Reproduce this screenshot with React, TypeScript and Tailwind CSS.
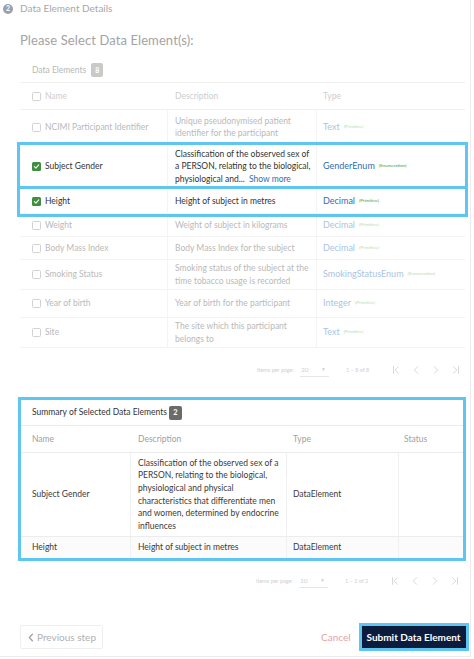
import React from "react";

const FONT = "font-['Lato','Liberation_Sans',sans-serif]";

function Box({ checked }: { checked?: boolean }) {
  if (checked) {
    return (
      <span className="w-[9px] h-[9px] rounded-[1.5px] bg-[#3f8f3f] flex items-center justify-center shrink-0">
        <svg width="7" height="7" viewBox="0 0 10 10">
          <path d="M2 5.2 L4.2 7.3 L8.2 2.8" fill="none" stroke="white" strokeWidth="1.6" strokeLinecap="round" strokeLinejoin="round" />
        </svg>
      </span>
    );
  }
  return <span className="w-[9px] h-[9px] rounded-[1.5px] border border-[#d2d2d2] bg-white shrink-0" />;
}

function PagIcon({ kind }: { kind: "first" | "prev" | "next" | "last" }) {
  const d: Record<string, string> = {
    first: "M3 2 V10 M9 2 L5 6 L9 10",
    prev: "M8 2 L4 6 L8 10",
    next: "M4 2 L8 6 L4 10",
    last: "M9 2 V10 M3 2 L7 6 L3 10",
  };
  return (
    <svg width="10" height="10" viewBox="0 0 12 12">
      <path d={d[kind]} fill="none" stroke="#d4d4d4" strokeWidth="1.1" strokeLinecap="round" strokeLinejoin="round" />
    </svg>
  );
}

function Pagination({ per, range }: { per: string; range: string }) {
  return (
    <div className="flex items-center h-[16px] text-[#cfcfcf]">
      <span className="text-[5.5px] w-[43px]">Items per page:</span>
      <div className="flex items-center w-[29px] h-[14px] border-b border-[#e6e6e6]">
        <span className="text-[6.5px] pl-[1px]">{per}</span>
        <span className="ml-auto mr-[3px] text-[5px]">▼</span>
      </div>
      <span className="text-[5.5px] ml-[17px] w-[45px]">{range}</span>
      <div className="flex items-center gap-[10px]">
        <PagIcon kind="first" />
        <PagIcon kind="prev" />
        <PagIcon kind="next" />
        <PagIcon kind="last" />
      </div>
    </div>
  );
}

type Row = {
  name: string;
  desc: React.ReactNode;
  type: string;
  kind: string;
  h: string;
  sel?: boolean;
};

const rows: Row[] = [
  { name: "NCIMI Participant Identifier", desc: "Unique pseudonymised patient identifier for the participant", type: "Text", kind: "(Primitive)", h: "h-[35px]" },
  {
    name: "Subject Gender",
    desc: (
      <>
        Classification of the observed sex of a PERSON, relating to the biological, physiological and...{" "}
        <span className="text-[#2f6db5] ml-[2px]">Show more</span>
      </>
    ),
    type: "GenderEnum",
    kind: "(Enumeration)",
    h: "h-[44px]",
    sel: true,
  },
  { name: "Height", desc: "Height of subject in metres", type: "Decimal", kind: "(Primitive)", h: "h-[25px]", sel: true },
  { name: "Weight", desc: "Weight of subject in kilograms", type: "Decimal", kind: "(Primitive)", h: "h-[23px]" },
  { name: "Body Mass Index", desc: "Body Mass Index for the subject", type: "Decimal", kind: "(Primitive)", h: "h-[23px]" },
  { name: "Smoking Status", desc: "Smoking status of the subject at the time tobacco usage is recorded", type: "SmokingStatusEnum", kind: "(Enumeration)", h: "h-[30px]" },
  { name: "Year of birth", desc: "Year of birth for the participant", type: "Integer", kind: "(Primitive)", h: "h-[28px]" },
  { name: "Site", desc: "The site which this participant belongs to", type: "Text", kind: "(Primitive)", h: "h-[30px]" },
];

export default function App() {
  return (
    <div className={`w-[474px] h-[659px] bg-white overflow-hidden ${FONT}`}>
      <div className="w-[471px] h-[657px] border-r border-b border-[#ececec] flex flex-col">
        {/* step header */}
        <div className="flex items-center h-[17px] pl-[3px] gap-[7px]">
          <span className="w-[10px] h-[10px] rounded-full bg-[#9aa1ad] text-white text-[7px] font-bold flex items-center justify-center leading-none">2</span>
          <span className="text-[10px] text-[#a8a8a8]">Data Element Details</span>
        </div>

        <div className="mt-[15px] pl-[20px] h-[16px] leading-[16px] text-[13px] text-[#a3a3a3] tracking-[0.1px]">
          Please Select Data Element(s):
        </div>

        {/* data elements card */}
        <div className="mt-[10px] ml-[20px] w-[445px]">
          <div className="h-[25px] flex items-center pl-[12px] border-b border-[#f0f0f0]">
            <span className="text-[8.5px] text-[#b8b8b8]">Data Elements</span>
            <span className="ml-[5px] w-[12px] h-[14px] rounded-[2px] bg-[#c9c9c9] text-white text-[7px] font-bold flex items-center justify-center">8</span>
          </div>
          <div className="grid grid-cols-[148px_149px_148px] h-[27px] items-center border-b border-[#f0f0f0] text-[8.5px] text-[#cdcdcd]">
            <div className="flex items-center gap-[4px] pl-[12px]">
              <Box />
              <span>Name</span>
            </div>
            <div className="pl-[7px]">Description</div>
            <div className="pl-[6px]">Type</div>
          </div>
          {rows.map((r) => (
            <div
              key={r.name}
              className={`grid grid-cols-[148px_149px_148px] ${r.h} border-b text-[8.5px] leading-[12.5px] ${
                r.sel
                  ? "relative z-10 bg-white ring-[3px] ring-[#5fc6f1] border-[#f3f3f3] text-[#333]"
                  : "bg-white border-[#f3f3f3] text-[#b9b9b9]"
              }`}
            >
              <div className="flex items-center gap-[4px] pl-[12px] border-r border-[#f4f4f4]">
                <Box checked={r.sel} />
                <span>{r.name}</span>
              </div>
              <div className="flex items-center pl-[7px] pr-[2px] border-r border-[#f4f4f4]">
                <div>{r.desc}</div>
              </div>
              <div className="flex items-center pl-[6px]">
                <span className={`text-[9px] ${r.sel ? "text-[#2f6db5]" : "text-[#aac4e2]"}`}>{r.type}</span>
                <span className={`ml-[4px] text-[4.5px] ${r.sel ? "text-[#3e9a3e]" : "text-[#b4dcb4]"}`}>{r.kind}</span>
              </div>
            </div>
          ))}
          <div className="h-[44px] flex items-center pl-[237px]">
            <Pagination per="20" range="1 – 8 of 8" />
          </div>
        </div>

        {/* summary */}
        <div className="mt-[5px] ml-[18px] w-[448px] border-[3px] border-[#5fc6f1] bg-white">
          <div className="h-[26px] flex items-center pl-[11px] border-b border-[#ececec]">
            <span className="text-[8.5px] text-[#333]">Summary of Selected Data Elements</span>
            <span className="ml-[2px] w-[13px] h-[14px] rounded-[2px] bg-[#6b6b6b] text-white text-[7.5px] font-bold flex items-center justify-center">2</span>
          </div>
          <div className="grid grid-cols-[110px_156px_112px_1fr] h-[27px] items-center border-b border-[#ececec] text-[8.5px] text-[#a0a0a0]">
            <div className="pl-[11px]">Name</div>
            <div className="pl-[7px]">Description</div>
            <div className="pl-[6px]">Type</div>
            <div className="pl-[5px]">Status</div>
          </div>
          <div className="grid grid-cols-[110px_156px_112px_1fr] h-[84px] border-b border-[#ececec] text-[8.5px] leading-[12.6px] text-[#3a3a3a]">
            <div className="flex items-center pl-[11px] border-r border-[#f0f0f0]">Subject Gender</div>
            <div className="flex items-center pl-[7px] pr-[2px] border-r border-[#f0f0f0]">
              Classification of the observed sex of a PERSON, relating to the biological, physiological and physical characteristics that differentiate men and women, determined by endocrine influences
            </div>
            <div className="flex items-center pl-[6px] border-r border-[#f0f0f0]">DataElement</div>
            <div />
          </div>
          <div className="grid grid-cols-[110px_156px_112px_1fr] h-[21px] text-[8.5px] text-[#3a3a3a] bg-[#fbfbfc]">
            <div className="flex items-center pl-[11px] border-r border-[#f0f0f0]">Height</div>
            <div className="flex items-center pl-[7px] border-r border-[#f0f0f0]">Height of subject in metres</div>
            <div className="flex items-center pl-[6px] border-r border-[#f0f0f0]">DataElement</div>
            <div />
          </div>
        </div>

        <div className="h-[40px] flex items-center pl-[256px]">
          <Pagination per="10" range="1 – 2 of 2" />
        </div>

        {/* footer buttons */}
        <div className="mt-[22px] h-[28px] flex items-center">
          <button className="ml-[20px] w-[83px] h-[24px] border border-[#efefef] rounded-[2px] flex items-center justify-center gap-[2px] text-[10px] text-[#b0b0b0]">
            <svg width="8" height="9" viewBox="0 0 8 10">
              <path d="M5.5 1.5 L2.2 5 L5.5 8.5" fill="none" stroke="#a5a5a5" strokeWidth="1.6" strokeLinecap="round" strokeLinejoin="round" />
            </svg>
            <span>Previous step</span>
          </button>
          <span className="ml-[218px] text-[10px] text-[#e6a2aa]">Cancel</span>
          <button className="ml-[11px] w-[104px] h-[22px] bg-[#0c1c3d] ring-[3px] ring-[#5fc6f1] text-white text-[10px] font-bold flex items-center justify-center">
            Submit Data Element
          </button>
        </div>
      </div>
    </div>
  );
}
